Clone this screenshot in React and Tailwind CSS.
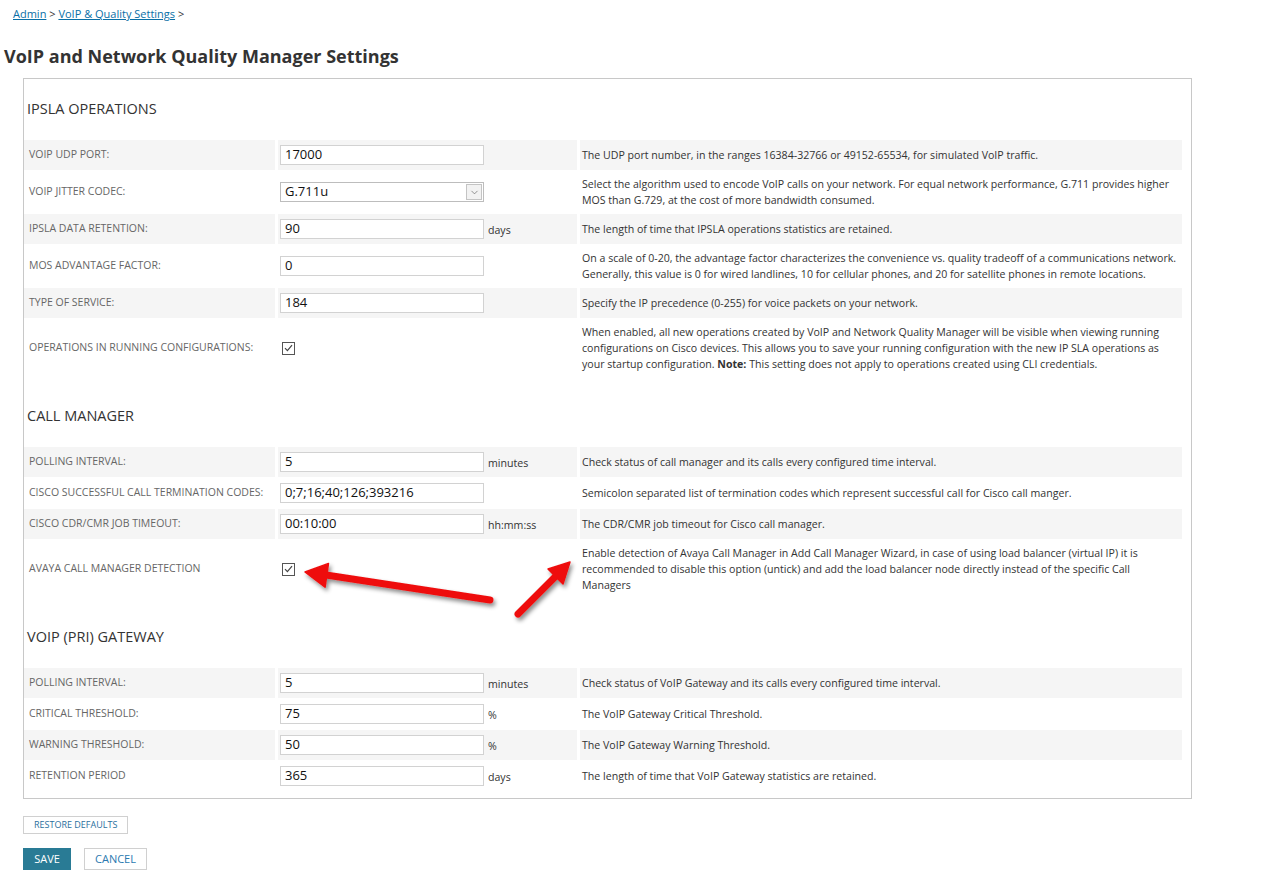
import { ChevronDown } from 'lucide-react';

const ipsla = [
    { label: 'VOIP UDP PORT:', type: 'text', value: '17000', desc: 'The UDP port number, in the ranges 16384-32766 or 49152-65534, for simulated VoIP traffic.' },
    { label: 'VOIP JITTER CODEC:', type: 'select', value: 'G.711u', desc: 'Select the algorithm used to encode VoIP calls on your network. For equal network performance, G.711 provides higher MOS than G.729, at the cost of more bandwidth consumed.' },
    { label: 'IPSLA DATA RETENTION:', type: 'text', value: '90', unit: 'days', desc: 'The length of time that IPSLA operations statistics are retained.' },
    { label: 'MOS ADVANTAGE FACTOR:', type: 'text', value: '0', desc: 'On a scale of 0-20, the advantage factor characterizes the convenience vs. quality tradeoff of a communications network. Generally, this value is 0 for wired landlines, 10 for cellular phones, and 20 for satellite phones in remote locations.' },
    { label: 'TYPE OF SERVICE:', type: 'text', value: '184', desc: 'Specify the IP precedence (0-255) for voice packets on your network.' },
    {
        label: 'OPERATIONS IN RUNNING CONFIGURATIONS:', type: 'check',
        desc: (
            <>
                When enabled, all new operations created by VoIP and Network Quality Manager will be visible when viewing running configurations on Cisco devices. This allows you to save your running configuration with the new IP SLA operations as your startup configuration. <b>Note:</b> This setting does not apply to operations created using CLI credentials.
            </>
        ),
    },
];

const callManager = [
    { label: 'POLLING INTERVAL:', type: 'text', value: '5', unit: 'minutes', desc: 'Check status of call manager and its calls every configured time interval.' },
    { label: 'CISCO SUCCESSFUL CALL TERMINATION CODES:', type: 'text', value: '0;7;16;40;126;393216', desc: 'Semicolon separated list of termination codes which represent successful call for Cisco call manger.' },
    { label: 'CISCO CDR/CMR JOB TIMEOUT:', type: 'text', value: '00:10:00', unit: 'hh:mm:ss', desc: 'The CDR/CMR job timeout for Cisco call manager.' },
    { label: 'AVAYA CALL MANAGER DETECTION', type: 'check', desc: 'Enable detection of Avaya Call Manager in Add Call Manager Wizard, in case of using load balancer (virtual IP) it is recommended to disable this option (untick) and add the load balancer node directly instead of the specific Call Managers' },
];

const gateway = [
    { label: 'POLLING INTERVAL:', type: 'text', value: '5', unit: 'minutes', desc: 'Check status of VoIP Gateway and its calls every configured time interval.' },
    { label: 'CRITICAL THRESHOLD:', type: 'text', value: '75', unit: '%', desc: 'The VoIP Gateway Critical Threshold.' },
    { label: 'WARNING THRESHOLD:', type: 'text', value: '50', unit: '%', desc: 'The VoIP Gateway Warning Threshold.' },
    { label: 'RETENTION PERIOD', type: 'text', value: '365', unit: 'days', desc: 'The length of time that VoIP Gateway statistics are retained.' },
];

function Field({ row }) {
    if (row.type === 'check') {
        return (
            <span className="ml-[2px] flex h-[13px] w-[13px] items-center justify-center border border-[#555] bg-white">
                <svg width="9" height="8" viewBox="0 0 9 8" fill="none">
                    <path d="M1 4.2 L3.4 6.6 L8 1.2" stroke="#444" strokeWidth="1.2" />
                </svg>
            </span>
        );
    }
    if (row.type === 'select') {
        return (
            <div className="flex h-[20px] w-[204px] items-center border border-[#bdbdbd] bg-white">
                <span className="flex-1 pl-[4px] text-[13px] text-[#111]">{row.value}</span>
                <span className="mr-[1px] flex h-[16px] w-[16px] items-center justify-center border border-[#c4c4c4] bg-[#f2f2f2]">
                    <ChevronDown size={11} strokeWidth={1.5} className="text-[#666]" />
                </span>
            </div>
        );
    }
    return (
        <>
            <div className="flex h-[20px] w-[204px] items-center border border-[#d2d2d2] bg-white pl-[4px] text-[13px] text-[#111]">
                {row.value}
            </div>
            {row.unit && <span className="ml-[4px] pt-[3px] text-[10.6px] text-[#333]">{row.unit}</span>}
        </>
    );
}

function Section({ title, rows, first }) {
    return (
        <div className={first ? 'pt-[20px]' : 'pt-[29px]'}>
            <h2 className="h-[20px] pl-[3px] text-[14.5px] leading-[20px] text-[#333]">{title}</h2>
            <div className="mt-[21px] flex flex-col gap-[1px]">
                {rows.map((row, i) => {
                    const bg = i % 2 === 0 ? 'bg-[#f5f5f5]' : 'bg-white';
                    return (
                        <div key={row.label} className="flex gap-[3px]">
                            <div className={`flex w-[251px] shrink-0 items-center pl-[5px] text-[10.5px] text-[#666] ${bg}`}>
                                {row.label}
                            </div>
                            <div className={`flex w-[299px] shrink-0 items-center pl-[2px] ${bg}`}>
                                <Field row={row} />
                            </div>
                            <div className={`flex min-h-[30px] flex-1 items-center py-[5px] pl-[2px] pr-[2px] text-[10.6px] leading-[16px] text-[#333] ${bg}`}>
                                <div>{row.desc}</div>
                            </div>
                        </div>
                    );
                })}
            </div>
        </div>
    );
}

export default function App() {
    return (
        <div className="relative min-h-[883px] bg-white pb-[14px] font-['Open_Sans',sans-serif]">
            <div className="pl-[13px] pt-[6px] text-[11px] leading-[16px] text-[#333]">
                <a href="#" className="text-[#0a6fa6] underline">Admin</a> &gt;{' '}
                <a href="#" className="text-[#0a6fa6] underline">VoIP &amp; Quality Settings</a> &gt;
            </div>
            <h1 className="mt-[22px] pl-[4px] text-[18px] font-bold leading-[24px] text-[#333]">
                VoIP and Network Quality Manager Settings
            </h1>
            <div className="ml-[23px] mt-[10px] w-[1169px] border border-[#c8c8c8] pb-[7px] pr-[9px]">
                <Section title="IPSLA OPERATIONS" rows={ipsla} first />
                <Section title="CALL MANAGER" rows={callManager} />
                <Section title="VOIP (PRI) GATEWAY" rows={gateway} />
            </div>
            <div className="ml-[23px] mt-[17px] flex">
                <button className="h-[18px] border border-[#d0d0d0] bg-white px-[10px] text-[9px] leading-[16px] text-[#2b6f9e]">
                    RESTORE DEFAULTS
                </button>
            </div>
            <div className="ml-[23px] mt-[14px] flex gap-[13px]">
                <button className="h-[22px] w-[48px] bg-[#297b95] text-[11px] text-white">SAVE</button>
                <button className="h-[22px] w-[63px] border border-[#d0d0d0] bg-white text-[11px] text-[#2b7ab0]">CANCEL</button>
            </div>

            <svg className="pointer-events-none absolute left-0 top-0" width="1285" height="883">
                <defs>
                    <filter id="shadow" x="-20%" y="-20%" width="140%" height="140%">
                        <feDropShadow dx="2" dy="3" stdDeviation="2" floodColor="#000" floodOpacity="0.45" />
                    </filter>
                </defs>
                <g filter="url(#shadow)" fill="#ee1111" stroke="#ee1111">
                    <line x1="490" y1="600" x2="326" y2="575" strokeWidth="7" strokeLinecap="round" />
                    <polygon points="305,572 328.5,563.4 325.1,587.2" strokeWidth="1.5" strokeLinejoin="round" />
                    <line x1="518" y1="614" x2="556" y2="576" strokeWidth="7" strokeLinecap="round" />
                    <polygon points="570,562 563,584 548,569" strokeWidth="1.5" strokeLinejoin="round" />
                </g>
            </svg>
        </div>
    );
}
